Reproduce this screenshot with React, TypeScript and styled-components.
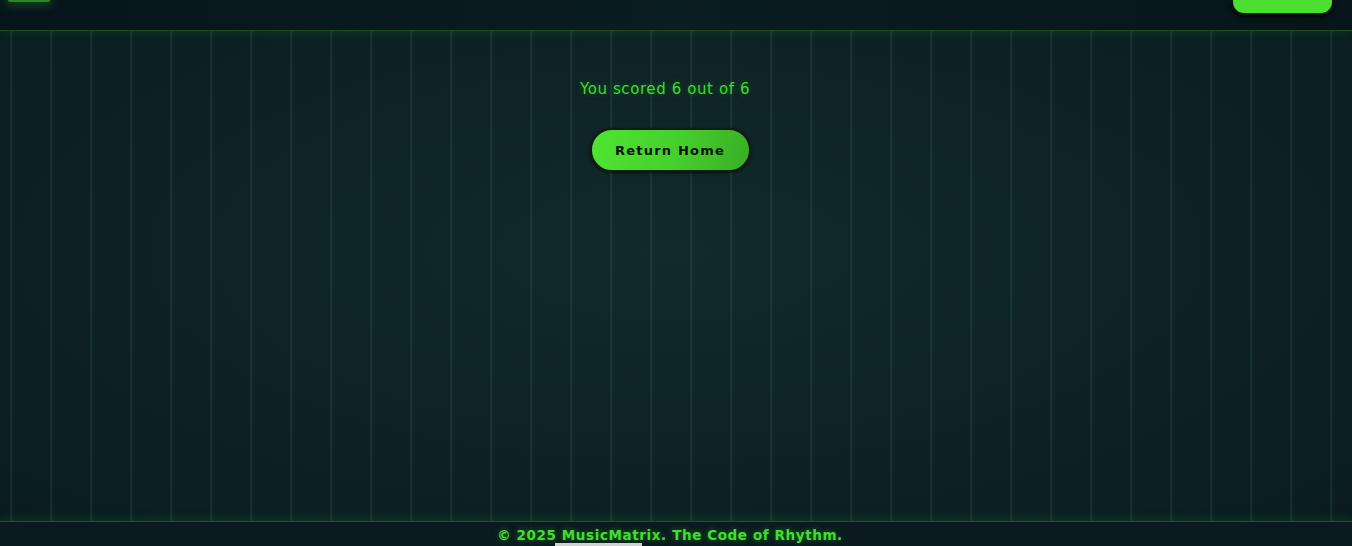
import React from "react";
import styled, { createGlobalStyle } from "styled-components";

const Global = createGlobalStyle`
  html, body { margin: 0; padding: 0; background: #0a1a1e; overflow: hidden; }
  #root { width: 1352px; height: 546px; }
`;

const Page = styled.div`
  position: relative;
  width: 1352px;
  height: 546px;
  display: flex;
  flex-direction: column;
  font-family: "DejaVu Sans", sans-serif;
  background: #0a1a1e;
`;

const Header = styled.header`
  height: 30px;
  flex: none;
  display: flex;
  justify-content: space-between;
  align-items: flex-start;
  padding: 0 18px 0 8px;
  background: linear-gradient(90deg, #07151b 0%, #0a1d21 50%, #07151b 100%);
  border-bottom: 1px solid #1e4a24;
  box-shadow: 0 2px 10px rgba(60, 200, 40, 0.12);
  position: relative;
  z-index: 2;
`;

const LogoGlow = styled.div`
  width: 42px;
  height: 2px;
  background: #2a8a22;
  box-shadow: 0 0 8px 3px rgba(60, 200, 40, 0.3);
  border-radius: 0 0 6px 6px;
`;

const HeaderButton = styled.div`
  width: 99px;
  height: 13px;
  background: #4be02f;
  border-radius: 0 0 13px 13px;
  border: 2px solid #0a1510;
  border-top: none;
  box-shadow: 0 2px 5px rgba(0, 0, 0, 0.8);
`;

const Main = styled.main`
  flex: 1;
  display: flex;
  flex-direction: column;
  align-items: center;
  padding: 49px 12px 0 0;
  background-color: #0d2124;
  background-image:
    linear-gradient(90deg, transparent 0, transparent 10px, rgba(70, 120, 100, 0.12) 10px, rgba(90, 140, 120, 0.2) 11px, rgba(70, 120, 100, 0.12) 12px, transparent 13px),
    radial-gradient(ellipse at 50% 45%, #112a2c 0%, #0e2426 45%, #0a1c20 100%);
  background-size: 40px 100%, 100% 100%;
  background-repeat: repeat-x, no-repeat;
`;

const Score = styled.p`
  margin: 0 10px 0 0;
  font-family: "DejaVu Sans", sans-serif;
  font-size: 15px;
  line-height: 18px;
  letter-spacing: 0.6px;
  color: #3fdc2a;
  text-shadow: 0 0 6px rgba(63, 220, 42, 0.35);
`;

const ReturnButton = styled.button`
  margin-top: 30px;
  width: 161px;
  height: 44px;
  border-radius: 22px;
  border: 2px solid #121a16;
  background: linear-gradient(100deg, #4fe531 0%, #45cf2c 55%, #3aae25 100%);
  box-shadow: 0 1px 3px rgba(0, 0, 0, 0.7);
  font-family: "DejaVu Sans", sans-serif;
  font-weight: 700;
  font-size: 13px;
  letter-spacing: 1.2px;
  color: #0a0f0a;
  cursor: pointer;
`;

const Footer = styled.footer`
  height: 25px;
  flex: none;
  display: flex;
  justify-content: center;
  align-items: flex-start;
  padding: 5px 12px 0 0;
  box-sizing: border-box;
  background: #0a1a1f;
  border-top: 1px solid #1f5326;
  box-shadow: 0 -2px 10px rgba(60, 200, 40, 0.15);
  position: relative;
  z-index: 2;
`;

const FooterText = styled.p`
  margin: 0;
  font-family: "DejaVu Sans", sans-serif;
  font-weight: 700;
  font-size: 13.5px;
  line-height: 16px;
  letter-spacing: 0.6px;
  color: #3ee02a;
  text-shadow: 0 0 6px rgba(62, 224, 42, 0.45);
`;

const ScrollThumb = styled.div`
  position: absolute;
  left: 555px;
  top: 543px;
  width: 87px;
  height: 3px;
  background: #cfd2d2;
  z-index: 5;
`;

export default function App() {
  return (
    <>
      <Global />
      <Page>
        <Header>
          <LogoGlow />
          <HeaderButton />
        </Header>
        <Main>
          <Score>You scored 6 out of 6</Score>
          <ReturnButton>Return Home</ReturnButton>
        </Main>
        <Footer>
          <FooterText>© 2025 MusicMatrix. The Code of Rhythm.</FooterText>
        </Footer>
        <ScrollThumb />
      </Page>
    </>
  );
}
